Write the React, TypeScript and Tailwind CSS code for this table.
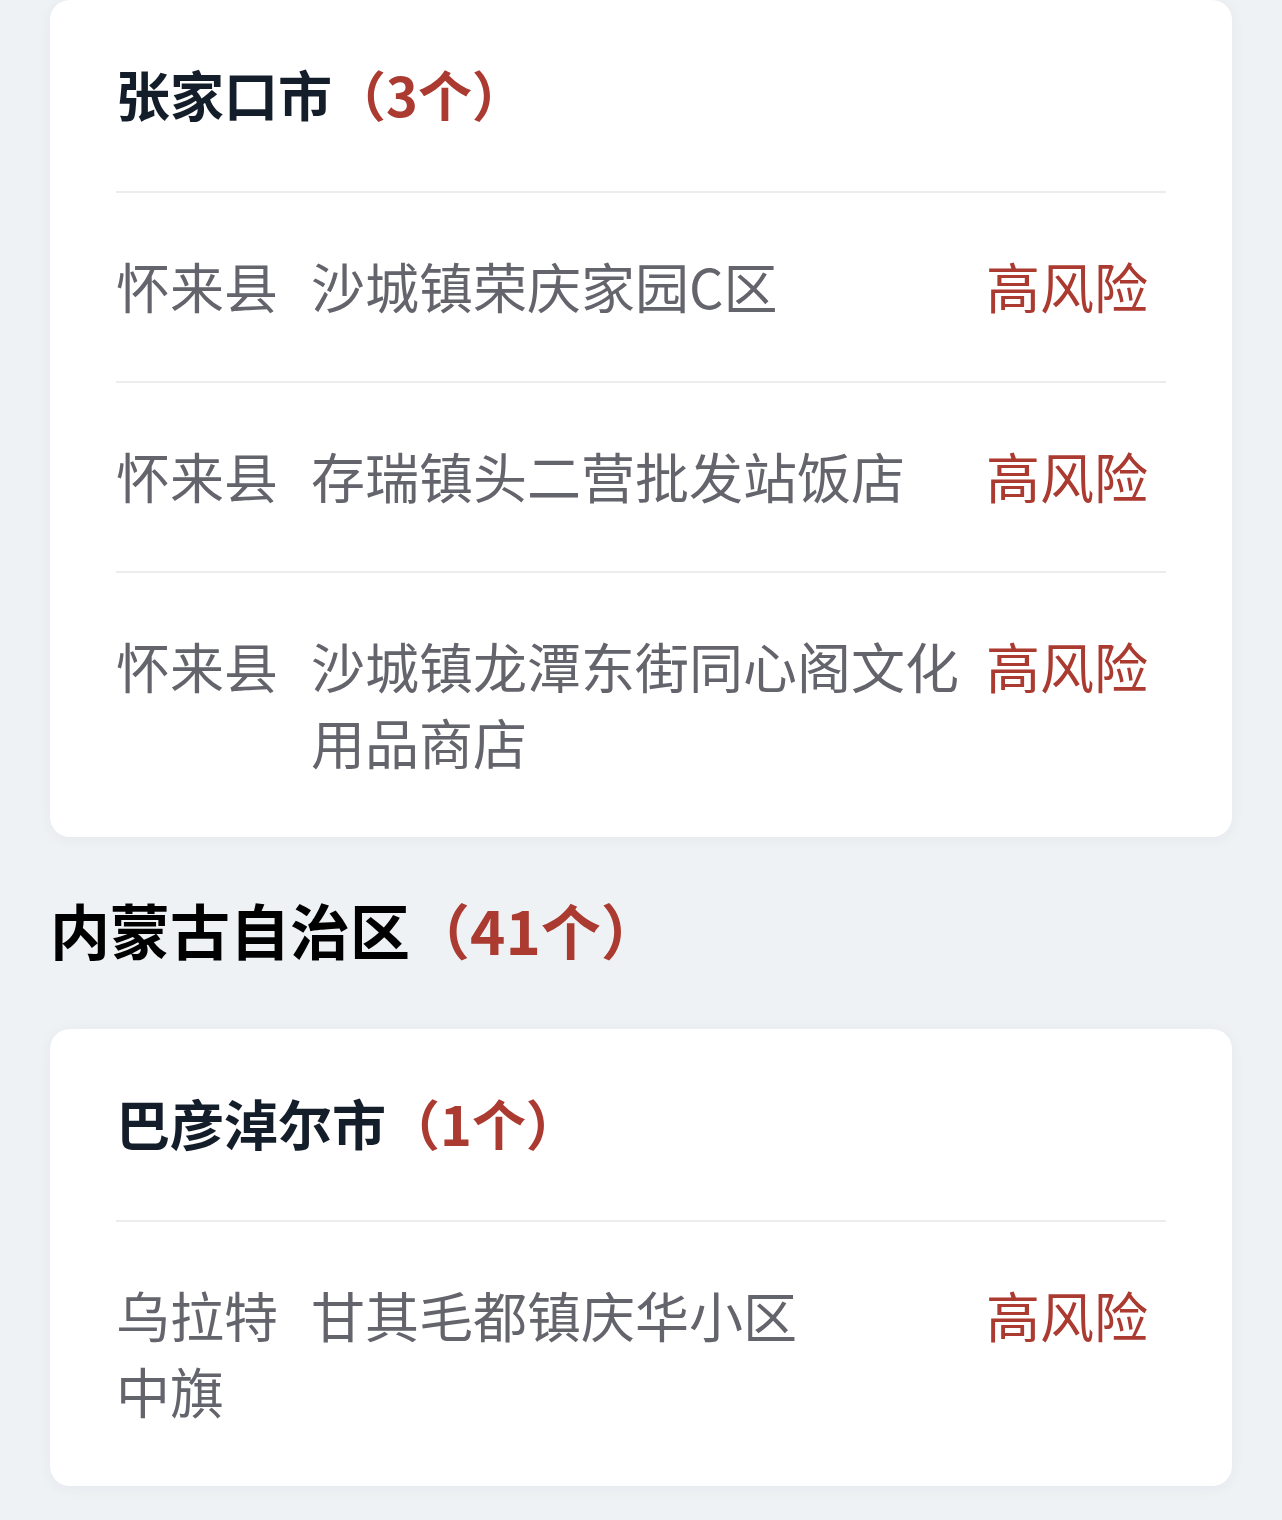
const FONT = { fontFamily: '"Noto Sans CJK SC", "Noto Sans", sans-serif' }

interface Place {
  county: string
  address: string
  level: string
}

interface City {
  name: string
  count: number
  places: Place[]
}

const zhangjiakou: City = {
  name: '张家口市',
  count: 3,
  places: [
    { county: '怀来县', address: '沙城镇荣庆家园C区', level: '高风险' },
    { county: '怀来县', address: '存瑞镇头二营批发站饭店', level: '高风险' },
    { county: '怀来县', address: '沙城镇龙潭东街同心阁文化用品商店', level: '高风险' },
  ],
}

const bayannaoer: City = {
  name: '巴彦淖尔市',
  count: 1,
  places: [{ county: '乌拉特中旗', address: '甘其毛都镇庆华小区', level: '高风险' }],
}

function CityCard({ city }: { city: City }) {
  return (
    <div className="bg-white rounded-[20px] px-[66px] shadow-[0_2px_14px_rgba(30,40,60,0.05)]">
      <div className="pt-[56px] pb-[59px] text-[54px] leading-[76px] font-bold text-[#141d2a]">
        {city.name}
        <span className="text-[#ab3a31]">（{city.count}个）</span>
      </div>
      {city.places.map((p, i) => (
        <div
          key={i}
          className="flex items-start border-t-2 border-[#ececef] pt-[55px] pb-[57px] text-[54px] leading-[76px] text-[#64646c]"
        >
          <div className="w-[195px] shrink-0 pr-[20px]">{p.county}</div>
          <div className="flex-1 min-w-0">{p.address}</div>
          <div className="w-[180px] shrink-0 text-[#ab3a31]">{p.level}</div>
        </div>
      ))}
    </div>
  )
}

export default function App() {
  return (
    <div className="min-h-[1520px] bg-[#eff2f5] px-[50px] pb-[40px]" style={FONT}>
      <CityCard city={zhangjiakou} />
      <h2 className="mt-[50px] mb-[58px] text-[60px] leading-[84px] font-bold text-black">
        内蒙古自治区<span className="text-[#ab3a31]">（41个）</span>
      </h2>
      <CityCard city={bayannaoer} />
    </div>
  )
}
